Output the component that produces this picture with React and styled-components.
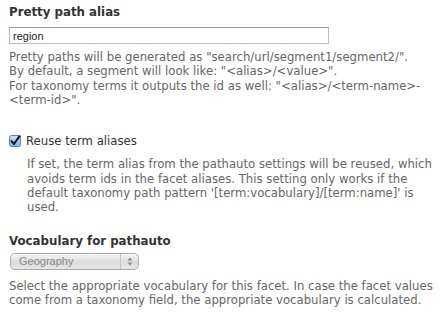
import React from "react";
import styled, { createGlobalStyle } from "styled-components";

const Global = createGlobalStyle`
  html, body { margin: 0; padding: 0; background: #fff; }
  body { font-family: "DejaVu Sans", Verdana, sans-serif; }
`;

const Page = styled.div`
  padding: 4px 9px 0 9px;
  width: 423px;
  font-size: 11.7px;
  line-height: 14.3px;
  color: #666;
`;

const Field = styled.div`
  display: flex;
  flex-direction: column;
  margin-bottom: ${(p) => p.$mb || 0}px;
`;

const Title = styled.div`
  font-weight: bold;
  color: #333;
  font-size: 11.8px;
  line-height: 16px;
  margin-bottom: ${(p) => p.$gap ?? 7}px;
`;

const TextInput = styled.input`
  box-sizing: border-box;
  width: 320px;
  height: 17px;
  margin: 0 0 6px 0;
  padding: 0 3px;
  border: 1px solid #bbb;
  border-top-color: #999;
  font-family: "Liberation Sans", Arial, sans-serif;
  font-size: 11px;
  color: #222;
  outline: none;
`;

const Desc = styled.div`
  color: #666;
  white-space: nowrap;
  padding-left: ${(p) => p.$indent || 0}px;
`;

const CheckRow = styled.label`
  display: flex;
  align-items: center;
  gap: 5px;
  color: #333;
  margin-bottom: 9px;
`;

const Box = styled.span`
  width: 12px;
  height: 12px;
  display: inline-flex;
  align-items: center;
  justify-content: center;
`;

const SelectBox = styled.div`
  box-sizing: border-box;
  width: 129px;
  height: 17px;
  border: 1px solid #aaa;
  border-radius: 5px;
  background: linear-gradient(#f6f6f6, #dcdcdc 55%, #e6e6e6);
  display: flex;
  align-items: center;
  margin: 0 0 9px 1px;
  box-shadow: inset 0 1px 0 #fff;
`;

const SelectText = styled.span`
  flex: 1;
  padding-left: 8px;
  font-family: "Liberation Sans", Arial, sans-serif;
  font-size: 11px;
  color: #888;
`;

const Arrows = styled.span`
  width: 17px;
  height: 100%;
  border-left: 1px solid #c4c4c4;
  display: flex;
  align-items: center;
  justify-content: center;
`;

export default function App() {
  return (
    <>
      <Global />
      <Page>
        <Field $mb={27}>
          <Title>Pretty path alias</Title>
          <TextInput defaultValue="region" />
          <Desc>
            Pretty paths will be generated as "search/url/segment1/segment2/".
            <br />
            By default, a segment will look like: "&lt;alias&gt;/&lt;value&gt;".
            <br />
            For taxonomy terms it outputs the id as well: "&lt;alias&gt;/&lt;term-name&gt;-
            <br />
            &lt;term-id&gt;".
          </Desc>
        </Field>
        <Field $mb={18}>
          <CheckRow>
            <Box>
              <svg width="12" height="12" viewBox="0 0 12 12">
                <defs>
                  <linearGradient id="cb" x1="0" y1="0" x2="0" y2="1">
                    <stop offset="0" stopColor="#cfe3f7" />
                    <stop offset="1" stopColor="#7fb0e3" />
                  </linearGradient>
                </defs>
                <rect x="0.5" y="0.5" width="11" height="11" rx="2" fill="url(#cb)" stroke="#5b7fa8" />
                <path d="M2.5 6.2 L5 9 L10.5 1.2" fill="none" stroke="#111" strokeWidth="2" strokeLinecap="round" strokeLinejoin="round" />
              </svg>
            </Box>
            Reuse term aliases
          </CheckRow>
          <Desc $indent={18}>
            If set, the term alias from the pathauto settings will be reused, which
            <br />
            avoids term ids in the facet aliases. This setting only works if the
            <br />
            default taxonomy path pattern '[term:vocabulary]/[term:name]' is
            <br />
            used.
          </Desc>
        </Field>
        <Field>
          <Title $gap={4}>Vocabulary for pathauto</Title>
          <SelectBox>
            <SelectText>Geography</SelectText>
            <Arrows>
              <svg width="6" height="9" viewBox="0 0 6 9">
                <path d="M3 0.5 L5.5 3.5 H0.5 Z M3 8.5 L5.5 5.5 H0.5 Z" fill="#888" />
              </svg>
            </Arrows>
          </SelectBox>
          <Desc>
            Select the appropriate vocabulary for this facet. In case the facet values
            <br />
            come from a taxonomy field, the appropriate vocabulary is calculated.
          </Desc>
        </Field>
      </Page>
    </>
  );
}
